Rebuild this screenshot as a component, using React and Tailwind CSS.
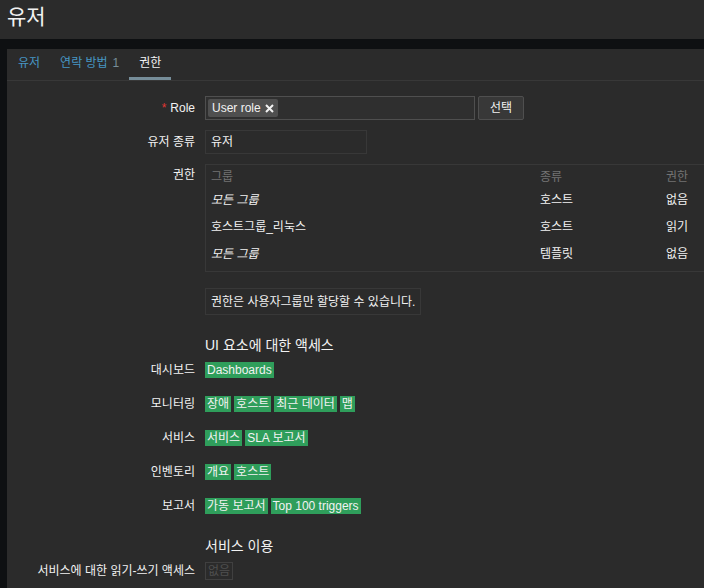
import React from "react";

function Tag({ children }) {
  return (
    <span className="h-4 leading-4 px-[2px] bg-[#2f9e5b] text-[#f2f2f2] whitespace-nowrap">
      {children}
    </span>
  );
}

function Row({ label, children, className = "", labelClass = "leading-6" }) {
  return (
    <div className={"flex gap-[10px] " + className}>
      <div className={"w-[178px] ml-[10px] shrink-0 text-right whitespace-nowrap " + labelClass}>
        {label}
      </div>
      {children}
    </div>
  );
}

export default function App() {
  const tagRows = [
    ["대시보드", ["Dashboards"]],
    ["모니터링", ["장애", "호스트", "최근 데이터", "맵"]],
    ["서비스", ["서비스", "SLA 보고서"]],
    ["인벤토리", ["개요", "호스트"]],
    ["보고서", ["가동 보고서", "Top 100 triggers"]],
  ];
  const perms = [
    ["모든 그룹", "호스트", "없음", true],
    ["호스트그룹_리눅스", "호스트", "읽기", false],
    ["모든 그룹", "템플릿", "없음", true],
  ];
  return (
    <div className="min-h-screen bg-[#0e1012] text-[12px] text-[#f2f2f2] font-['Liberation_Sans','Noto_Sans_CJK_KR',sans-serif] overflow-hidden">
      <header className="h-[39px] bg-[#2b2b2b] px-[7px] pt-[5px]">
        <h1 className="text-[21px] leading-[24px]">유저</h1>
      </header>
      <div className="pt-[10px] pl-[7px]">
        <div className="bg-[#2b2b2b] h-[539px]">
          <div className="flex h-[32px] border-b border-[#383838] pl-[1px]">
            <div className="px-[10px] flex items-center border-b-[3px] border-transparent text-[#4796c4]">유저</div>
            <div className="px-[10px] flex items-center border-b-[3px] border-transparent text-[#4796c4]">
              연락 방법<span className="ml-[5px] text-[#768d99]">1</span>
            </div>
            <div className="px-[10px] flex items-center border-b-[3px] border-[#768d99] text-[#f2f2f2]">권한</div>
          </div>

          <div className="pt-[15px] flex flex-col">
            <Row label={<><span className="text-[#e33734] mr-[4px]">*</span>Role</>} className="mb-[10px]">
              <div className="flex">
                <div className="w-[270px] h-6 border border-[#4f4f4f] bg-[#2f2f2f] pl-[2px] pt-[2px]">
                  <span className="inline-flex items-center h-[18px] px-[4px] gap-[4px] bg-[#4f4f4f] rounded-[2px]">
                    User role
                    <svg width="9" height="9" viewBox="0 0 9 9">
                      <path d="M1 1L8 8M8 1L1 8" stroke="#f2f2f2" strokeWidth="2" />
                    </svg>
                  </span>
                </div>
                <button className="ml-[3px] w-[46px] h-6 border border-[#4f4f4f] bg-[#383838] rounded-[2px] text-[#f2f2f2]">
                  선택
                </button>
              </div>
            </Row>

            <Row label="유저 종류" className="mb-[10px]">
              <div className="w-[162px] h-6 border border-[#383838] px-[5px] flex items-center">유저</div>
            </Row>

            <Row label="권한" className="mb-[16px]" labelClass="pt-[3px] leading-[16px]">
              <div className="w-[560px] shrink-0 border border-[#383838] pt-[3px] pb-[4px] pl-[5px]">
                <div className="grid grid-cols-[329px_126px_1fr] h-[18px] items-center text-[#737373]">
                  <span>그룹</span>
                  <span>종류</span>
                  <span>권한</span>
                </div>
                {perms.map(([g, t, p, it], i) => (
                  <div key={i} className="grid grid-cols-[329px_126px_1fr] h-[27px] items-center">
                    <span className={it ? "italic" : ""}>{g}</span>
                    <span>{t}</span>
                    <span>{p}</span>
                  </div>
                ))}
              </div>
            </Row>

            <Row label="" className="mb-[20px]">
              <div className="h-[27px] border border-[#383838] px-[5px] flex items-center whitespace-nowrap">
                권한은 사용자그룹만 할당할 수 있습니다.
              </div>
            </Row>

            <Row label="" className="mb-[3px]">
              <div className="h-[20px] leading-[20px] text-[14px]">UI 요소에 대한 액세스</div>
            </Row>

            {tagRows.map(([label, tags], i) => (
              <Row key={label} label={label} className={i === tagRows.length - 1 ? "mb-[18px]" : "mb-[10px]"}>
                <div className="h-6 flex items-center gap-[3px]">
                  {tags.map((t) => (
                    <Tag key={t}>{t}</Tag>
                  ))}
                </div>
              </Row>
            ))}

            <Row label="" className="mb-[3px]">
              <div className="h-[20px] leading-[20px] text-[14px]">서비스 이용</div>
            </Row>

            <Row label="서비스에 대한 읽기-쓰기 액세스">
              <div className="h-6 flex items-center">
                <span className="h-[18px] leading-[16px] px-[2px] border border-[#404040] text-[#4f4f4f]">없음</span>
              </div>
            </Row>
          </div>
        </div>
      </div>
    </div>
  );
}
